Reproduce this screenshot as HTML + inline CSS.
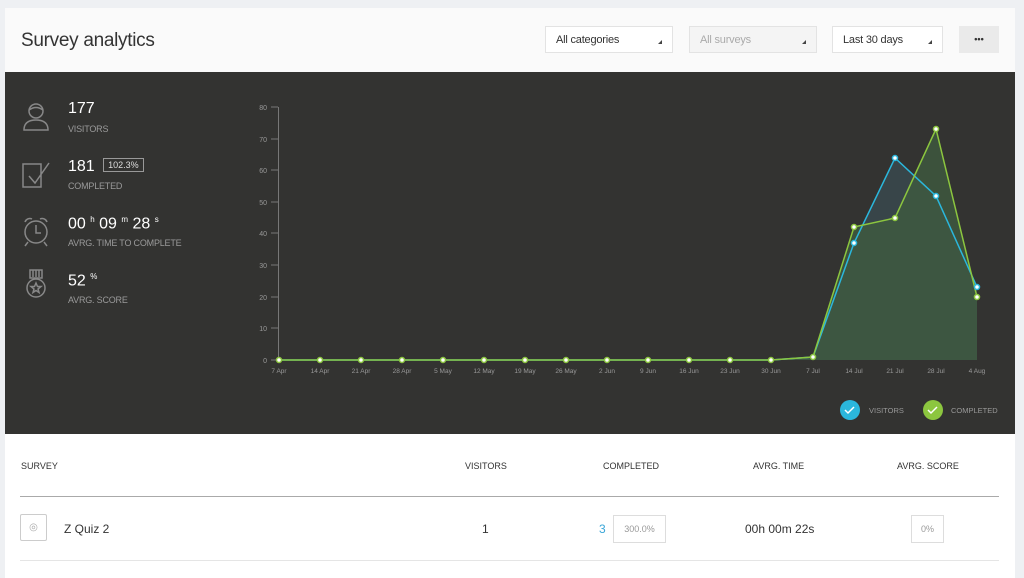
<!DOCTYPE html>
<html><head><meta charset="utf-8"><style>
body{margin:0;width:1024px;height:570px;background:#eef0f3;font-family:"Liberation Sans",sans-serif;overflow:hidden;position:relative}
.card{position:absolute;left:5px;top:8px;width:1010px;height:570px;background:#fff}
.hdr{position:absolute;left:0;top:0;width:1010px;height:64px;background:#fafafa}
.title{position:absolute;left:16px;top:22px;font-size:19px;color:#333;letter-spacing:-0.3px}
.sel{position:absolute;top:18px;height:27px;border:1px solid #e3e3e3;background:#fff;font-size:11px;color:#333;line-height:27px;padding-left:10px;box-sizing:border-box;letter-spacing:-0.2px}
.sel:after{content:"";position:absolute;right:10px;top:13px;border-left:4px solid transparent;border-bottom:4px solid #444}
.dark{position:absolute;left:0;top:64px;width:1010px;height:362px;background:#333331}
.stat{position:absolute;left:63px;color:#fff;font-size:16px}
.lbl{position:absolute;left:63px;color:#9a9a9a;font-size:9px;letter-spacing:-0.2px}
.th{position:absolute;top:453px;font-size:9px;color:#333}
</style></head><body>
<div class="card">
<div class="hdr">
<div class="title">Survey analytics</div>
<div class="sel" style="left:540px;width:128px">All categories</div>
<div class="sel" style="left:684px;width:128px;background:#f4f4f4;color:#aaa">All surveys</div>
<div class="sel" style="left:827px;width:111px">Last 30 days</div>
<div style="position:absolute;left:954px;top:18px;width:40px;height:27px;background:#eaeaea;text-align:center;line-height:27px;font-size:9px;font-weight:bold;color:#333">•••</div>
</div>
<div class="dark">
<svg width="60" height="260" style="position:absolute;left:0;top:0" fill="none" stroke="#888" stroke-width="1.5">
<circle cx="31" cy="39" r="7"/><path d="M24 38q7-5 14 0M19 58q0-10 12-10q12 0 12 10z"/>
<path d="M18 92h18v23h-18zM24 104l6 7l14-20"/>
<circle cx="31" cy="160" r="11"/><path d="M31 153v8h5M20 150a5 5 0 0 1 7-3M42 150a5 5 0 0 0-7-3M23 170l-3 4M39 170l3 4"/>
<path d="M25 198h12v8h-12zM28 198v7M31 198v7M34 198v7"/><circle cx="31" cy="216" r="9"/><path d="M31 211l1.5 3.5h3.5l-3 2.5l1 3.5l-3-2l-3 2l1-3.5l-3-2.5h3.5z"/>
</svg>
<div class="stat" style="top:28px">177</div><div class="lbl" style="top:52px">VISITORS</div>
<div class="stat" style="top:86px">181 <span style="display:inline-block;border:1px solid #999;color:#ddd;font-size:9px;padding:1px 4px;vertical-align:3px;margin-left:4px">102.3%</span></div><div class="lbl" style="top:109px">COMPLETED</div>
<div class="stat" style="top:143px">00 <sup style="font-size:8px">h</sup> 09 <sup style="font-size:8px">m</sup> 28 <sup style="font-size:8px">s</sup></div><div class="lbl" style="top:166px">AVRG. TIME TO COMPLETE</div>
<div class="stat" style="top:200px">52 <sup style="font-size:8px">%</sup></div><div class="lbl" style="top:223px">AVRG. SCORE</div>
</div>
<div style="position:absolute;left:15px;top:488px;width:979px;height:1px;background:#aaa"></div>
<div style="position:absolute;left:15px;top:552px;width:979px;height:1px;background:#e5e5e5"></div>
<div class="th" style="left:16px">SURVEY</div>
<div class="th" style="left:460px">VISITORS</div>
<div class="th" style="left:598px">COMPLETED</div>
<div class="th" style="left:748px">AVRG. TIME</div>
<div class="th" style="left:892px">AVRG. SCORE</div>
<div style="position:absolute;left:15px;top:506px;width:27px;height:27px;border:1px solid #ccc;border-radius:2px;box-sizing:border-box;color:#aaa;font-size:10px;text-align:center;line-height:25px">◎</div>
<div style="position:absolute;left:59px;top:514px;font-size:12px;color:#333">Z Quiz 2</div>
<div style="position:absolute;left:477px;top:514px;font-size:12px;color:#333">1</div>
<div style="position:absolute;left:594px;top:514px;font-size:12px;color:#3aa6d8">3</div>
<div style="position:absolute;left:608px;top:507px;width:53px;height:28px;border:1px solid #ddd;box-sizing:border-box;font-size:9px;color:#999;text-align:center;line-height:26px">300.0%</div>
<div style="position:absolute;left:740px;top:514px;font-size:12px;color:#333">00h 00m 22s</div>
<div style="position:absolute;left:906px;top:507px;width:33px;height:28px;border:1px solid #ddd;box-sizing:border-box;font-size:9px;color:#999;text-align:center;line-height:26px">0%</div>
</div>
<svg width="1024" height="570" style="position:absolute;left:0;top:0" font-family="Liberation Sans" font-size="7" fill="#999">
<g text-anchor="end">
<text x="267" y="110">80</text><text x="267" y="142">70</text><text x="267" y="173">60</text><text x="267" y="205">50</text><text x="267" y="236">40</text><text x="267" y="268">30</text><text x="267" y="300">20</text><text x="267" y="331">10</text><text x="267" y="363">0</text>
</g>
<g stroke="#777" stroke-width="1"><path d="M278.5 107v253M271 107h7M271 139h7M271 170h7M271 202h7M271 233h7M271 265h7M271 297h7M271 328h7M271 360h7"/></g>
<g text-anchor="middle" font-size="6.5">
<text x="279" y="373">7 Apr</text><text x="320" y="373">14 Apr</text><text x="361" y="373">21 Apr</text><text x="402" y="373">28 Apr</text><text x="443" y="373">5 May</text><text x="484" y="373">12 May</text><text x="525" y="373">19 May</text><text x="566" y="373">26 May</text><text x="607" y="373">2 Jun</text><text x="648" y="373">9 Jun</text><text x="689" y="373">16 Jun</text><text x="730" y="373">23 Jun</text><text x="771" y="373">30 Jun</text><text x="813" y="373">7 Jul</text><text x="854" y="373">14 Jul</text><text x="895" y="373">21 Jul</text><text x="936" y="373">28 Jul</text><text x="977" y="373">4 Aug</text>
</g>
<path d="M279 360H771L813 357L854 243L895 158L936 196L977 287V360Z" fill="#3a4a50" opacity="0.8"/>
<path d="M279 360H771L813 357L854 227L895 218L936 129L977 297V360Z" fill="#3f5a40" opacity="0.8"/>
<path d="M279 360H771L813 357L854 243L895 158L936 196L977 287" fill="none" stroke="#2bb7dc" stroke-width="1.5"/>
<path d="M279 360H771L813 357L854 227L895 218L936 129L977 297" fill="none" stroke="#8cc63f" stroke-width="1.5"/>
<g fill="#fff" stroke="#2bb7dc" stroke-width="1.5"><circle cx="854" cy="243" r="2.5"/><circle cx="895" cy="158" r="2.5"/><circle cx="936" cy="196" r="2.5"/><circle cx="977" cy="287" r="2.5"/></g>
<g fill="#fff" stroke="#8cc63f" stroke-width="1.5">
<circle cx="279" cy="360" r="2.5"/><circle cx="320" cy="360" r="2.5"/><circle cx="361" cy="360" r="2.5"/><circle cx="402" cy="360" r="2.5"/><circle cx="443" cy="360" r="2.5"/><circle cx="484" cy="360" r="2.5"/><circle cx="525" cy="360" r="2.5"/><circle cx="566" cy="360" r="2.5"/><circle cx="607" cy="360" r="2.5"/><circle cx="648" cy="360" r="2.5"/><circle cx="689" cy="360" r="2.5"/><circle cx="730" cy="360" r="2.5"/><circle cx="771" cy="360" r="2.5"/><circle cx="813" cy="357" r="2.5"/><circle cx="854" cy="227" r="2.5"/><circle cx="895" cy="218" r="2.5"/><circle cx="936" cy="129" r="2.5"/><circle cx="977" cy="297" r="2.5"/></g>
<circle cx="850" cy="410" r="10" fill="#2bb7dc"/><path d="M845 410l3 3l6-6" stroke="#fff" stroke-width="1.5" fill="none"/>
<text x="869" y="413" font-size="7.5">VISITORS</text>
<circle cx="933" cy="410" r="10" fill="#8cc63f"/><path d="M928 410l3 3l6-6" stroke="#fff" stroke-width="1.5" fill="none"/>
<text x="951" y="413" font-size="7.5">COMPLETED</text>
</svg>
</body></html>
